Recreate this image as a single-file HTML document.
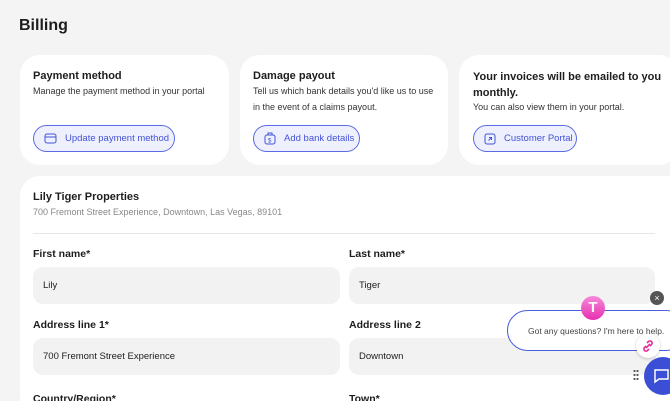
<!DOCTYPE html>
<html style="width:670px;height:401px;overflow:hidden"><head><style>
*{box-sizing:border-box;margin:0;padding:0}
body{width:670px;height:401px;overflow:hidden;background:#f4f4f5;font-family:"Liberation Sans",sans-serif;color:#1d1d1f;position:relative}
h1{position:absolute;left:19px;top:17px;font-size:16px;font-weight:bold}
.card{position:absolute;background:#fff;border-radius:20px}
.t{position:absolute;font-size:11px;font-weight:bold}
.d{position:absolute;font-size:9px;color:#333;line-height:16px}
.btn{position:absolute;height:27px;border:1px solid #5b6be6;background:#eef0fd;border-radius:14px;color:#4353d8;font-size:9.5px;display:flex;align-items:center;padding-left:10px;gap:8px}
.lab{position:absolute;font-size:10.5px;font-weight:bold}
.in{position:absolute;height:37px;background:#f2f2f3;border-radius:10px;font-size:9.5px;padding-left:10px;line-height:37px}
</style></head><body>
<h1>Billing</h1>
<div class="card" style="left:20px;top:55px;width:209px;height:110px"></div>
<div class="card" style="left:240px;top:55px;width:208px;height:110px"></div>
<div class="card" style="left:459px;top:55px;width:220px;height:110px"></div>
<div class="t" style="left:33px;top:70px">Payment method</div>
<div class="d" style="left:33px;top:83px">Manage the payment method in your portal</div>
<div class="btn" style="left:33px;top:125px;width:142px"><svg width="13" height="11" viewBox="0 0 13 11"><rect x="1" y="1" width="11" height="9" rx="2" fill="none" stroke="#4353d8"/><line x1="1" y1="4" x2="12" y2="4" stroke="#4353d8"/></svg>Update payment method</div>
<div class="t" style="left:253px;top:70px">Damage payout</div>
<div class="d" style="left:253px;top:83px">Tell us which bank details you'd like us to use<br>in the event of a claims payout.</div>
<div class="btn" style="left:253px;top:125px;width:107px"><svg width="12" height="13" viewBox="0 0 12 13"><rect x="1" y="3" width="10" height="9" rx="2" fill="none" stroke="#4353d8"/><path d="M4 3V1h4v2" fill="none" stroke="#4353d8"/><text x="4" y="10.5" font-size="6" fill="#4353d8">$</text></svg>Add bank details</div>
<div class="t" style="left:473px;top:69px;line-height:16px">Your invoices will be emailed to you<br>monthly.</div>
<div class="d" style="left:473px;top:99px">You can also view them in your portal.</div>
<div class="btn" style="left:473px;top:125px;width:104px"><svg width="12" height="12" viewBox="0 0 12 12"><rect x="1" y="1" width="10" height="10" rx="2" fill="none" stroke="#4353d8"/><path d="M4.5 7.5l3-3M5 4.5h2.5V7" fill="none" stroke="#4353d8"/></svg>Customer Portal</div>
<div class="card" style="left:20px;top:176px;width:670px;height:240px"></div>
<div class="t" style="left:33px;top:191px">Lily Tiger Properties</div>
<div class="d" style="left:33px;top:204px;color:#888">700 Fremont Street Experience, Downtown, Las Vegas, 89101</div>
<div style="position:absolute;left:33px;top:233px;width:622px;height:1px;background:#e6e6e6"></div>
<div class="lab" style="left:33px;top:248px">First name*</div>
<div class="lab" style="left:349px;top:248px">Last name*</div>
<div class="in" style="left:33px;top:267px;width:307px">Lily</div>
<div class="in" style="left:349px;top:267px;width:306px">Tiger</div>
<div class="lab" style="left:33px;top:319px">Address line 1*</div>
<div class="lab" style="left:349px;top:319px">Address line 2</div>
<div class="in" style="left:33px;top:338px;width:307px">700 Fremont Street Experience</div>
<div class="in" style="left:349px;top:338px;width:306px">Downtown</div>
<div class="lab" style="left:33px;top:393px">Country/Region*</div>
<div class="lab" style="left:349px;top:393px">Town*</div>
<div style="position:absolute;left:507px;top:310px;width:180px;height:41px;border:1.5px solid #4a5fe0;border-radius:21px;background:#fff;font-size:8.5px;color:#444;padding:15px 0 0 20px">Got any questions? I'm here to help.</div>
<div style="position:absolute;left:581px;top:296px;width:24px;height:24px;border-radius:50%;background:linear-gradient(#f58ad8,#e82fb0);color:#fff;font-weight:bold;font-size:15px;text-align:center;line-height:24px">T</div>
<div style="position:absolute;left:650px;top:291px;width:14px;height:14px;border-radius:50%;background:#555;color:#fff;font-size:9px;text-align:center;line-height:14px">×</div>
<div style="position:absolute;left:636px;top:334px;width:24px;height:24px;border-radius:50%;background:#fff;box-shadow:0 1px 3px rgba(0,0,0,.2)"><svg width="24" height="24" viewBox="0 0 24 24"><path d="M10 14l4-4M11 9l1.5-1.5a2 2 0 013 3L14 12M13 15l-1.5 1.5a2 2 0 01-3-3L10 12" fill="none" stroke="#e0309a" stroke-width="1.6"/></svg></div>
<div style="position:absolute;left:633px;top:369px;width:6px;height:12px;background:radial-gradient(circle,#555 1px,transparent 1.2px) 0 0/3px 4px"></div>
<div style="position:absolute;left:644px;top:357px;width:38px;height:38px;border-radius:50%;background:#3b4fd6"><svg width="38" height="38" viewBox="0 0 38 38"><path d="M11 13h13v9h-9l-4 3z" fill="none" stroke="#fff" stroke-width="1.5"/></svg></div>
</body></html>
